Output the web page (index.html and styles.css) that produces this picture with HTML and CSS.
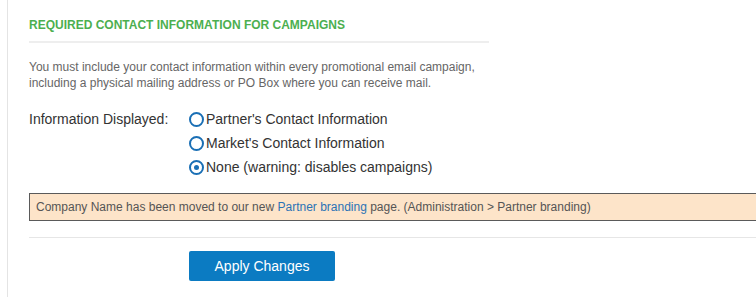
FILE: index.html
```html
<!DOCTYPE html>
<html lang="en">
<head>
<meta charset="UTF-8">
<title>Campaign Contact Settings</title>
<link rel="stylesheet" href="styles.css">
</head>
<body>
<div class="page">
  <div class="section">
    <h2 class="title">REQUIRED CONTACT INFORMATION FOR CAMPAIGNS</h2>
    <p class="intro">
      You must include your contact information within every promotional email campaign,<br>
      including a physical mailing address or PO Box where you can receive mail.
    </p>
    <div class="field">
      <div class="label">Information Displayed:</div>
      <div class="options">
        <label class="option"><span class="radio"></span>Partner's Contact Information</label>
        <label class="option"><span class="radio"></span>Market's Contact Information</label>
        <label class="option"><span class="radio checked"></span>None (warning: disables campaigns)</label>
      </div>
    </div>
  </div>
  <div class="notice">
    Company Name has been moved to our new <a href="#">Partner branding</a> page. (Administration &gt; Partner branding)
  </div>
  <div class="actions">
    <button class="button">Apply Changes</button>
  </div>
</div>
</body>
</html>
```

FILE: styles.css
```css
body {
  margin: 0;
  font-family: "Liberation Sans", Arial, sans-serif;
  background-color: #fff;
  overflow: hidden;
}
.page {
  box-sizing: border-box;
  margin-left: 7px;
  border-left: 1px solid #e4e4e4;
  padding-left: 21px;
  height: 297px;
  padding-top: 18px;
}
.section {
  width: 460px;
}
.title {
  margin: 0;
  font-size: 12px;
  font-weight: bold;
  color: #4caf50;
  padding-bottom: 9px;
  border-bottom: 2px solid #eeeeee;
}
.intro {
  margin: 16px 0 0 0;
  font-size: 12px;
  line-height: 16px;
  color: #666;
}
.field {
  display: flex;
  margin-top: 16px;
  font-size: 14px;
  color: #333;
}
.label {
  width: 160px;
  line-height: 24px;
}
.options {
  display: flex;
  flex-direction: column;
}
.option {
  display: flex;
  align-items: center;
  line-height: 24px;
}
.radio {
  width: 11px;
  height: 11px;
  border: 2px solid #1a6fb5;
  border-radius: 50%;
  margin-right: 2px;
  position: relative;
}
.radio.checked::after {
  content: "";
  position: absolute;
  left: 3px;
  top: 3px;
  width: 5px;
  height: 5px;
  border-radius: 50%;
  background-color: #1a6fb5;
}
.notice {
  margin-top: 14px;
  background-color: #fde4c9;
  border: 1px solid #5a5a5a;
  border-right: none;
  padding: 6px 6px;
  font-size: 12px;
  line-height: 14px;
  color: #555;
}
.notice a {
  color: #2b73b6;
  text-decoration: none;
}
.actions {
  margin-top: 16px;
  border-top: 1px solid #e6e6e6;
  padding-top: 13px;
  padding-left: 160px;
}
.button {
  width: 146px;
  height: 30px;
  font-family: "Liberation Sans", Arial, sans-serif;
  font-size: 14px;
  color: #fff;
  background-color: #0b7bc2;
  border: none;
  border-radius: 2px;
  cursor: pointer;
}
```
